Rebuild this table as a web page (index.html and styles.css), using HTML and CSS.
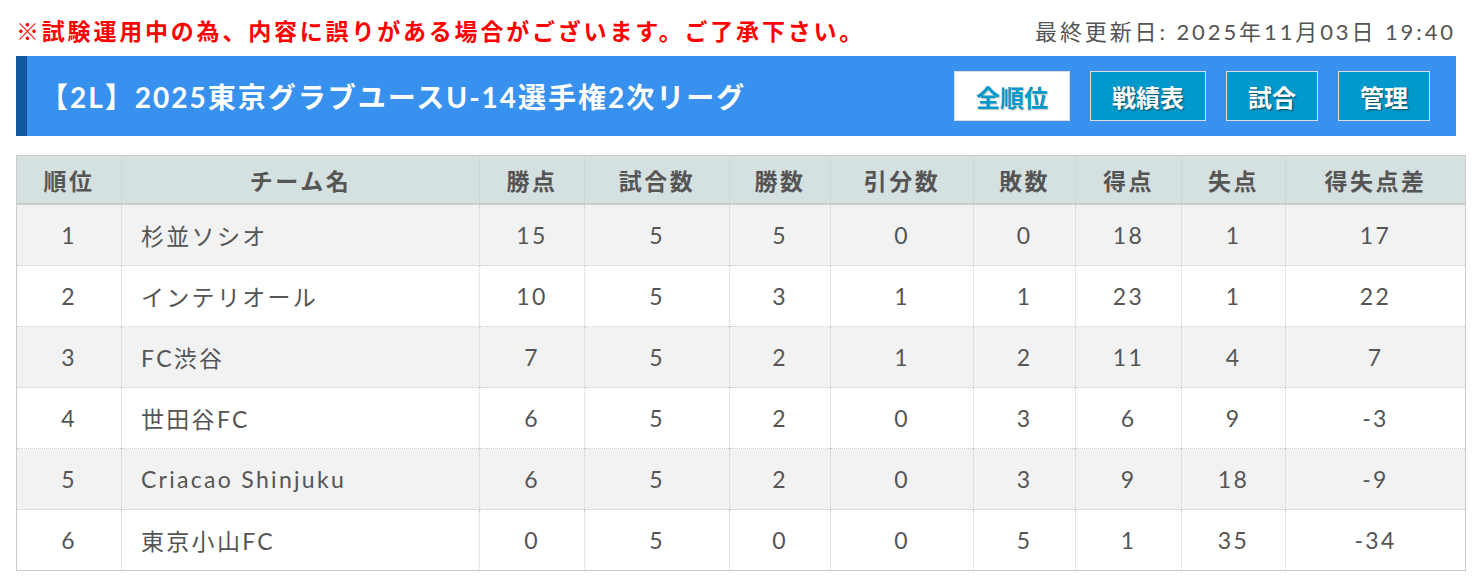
FILE: index.html
```html
<!DOCTYPE html>
<html lang="ja">
<head>
<meta charset="utf-8">
<title>順位表</title>
<link rel="stylesheet" href="styles.css">
</head>
<body>
<div class="page">
  <div class="topbar">
    <p class="notice">※試験運用中の為、内容に誤りがある場合がございます。ご了承下さい。</p>
    <p class="updated">最終更新日: 2025年11月03日 19:40</p>
  </div>
  <div class="titlebar">
    <h1 class="title">【2L】2025東京グラブユースU-14選手権2次リーグ</h1>
    <nav class="tabs">
      <a class="tab active">全順位</a>
      <a class="tab">戦績表</a>
      <a class="tab">試合</a>
      <a class="tab">管理</a>
    </nav>
  </div>
  <table class="standings">
    <colgroup>
      <col class="c-rank"><col class="c-team"><col class="c-pts"><col class="c-games"><col class="c-win"><col class="c-draw"><col class="c-lose"><col class="c-gf"><col class="c-ga"><col class="c-gd">
    </colgroup>
    <thead>
      <tr><th>順位</th><th>チーム名</th><th>勝点</th><th>試合数</th><th>勝数</th><th>引分数</th><th>敗数</th><th>得点</th><th>失点</th><th>得失点差</th></tr>
    </thead>
    <tbody>
      <tr><td>1</td><td class="team">杉並ソシオ</td><td>15</td><td>5</td><td>5</td><td>0</td><td>0</td><td>18</td><td>1</td><td>17</td></tr>
      <tr><td>2</td><td class="team">インテリオール</td><td>10</td><td>5</td><td>3</td><td>1</td><td>1</td><td>23</td><td>1</td><td>22</td></tr>
      <tr><td>3</td><td class="team">FC渋谷</td><td>7</td><td>5</td><td>2</td><td>1</td><td>2</td><td>11</td><td>4</td><td>7</td></tr>
      <tr><td>4</td><td class="team">世田谷FC</td><td>6</td><td>5</td><td>2</td><td>0</td><td>3</td><td>6</td><td>9</td><td>-3</td></tr>
      <tr><td>5</td><td class="team">Criacao Shinjuku</td><td>6</td><td>5</td><td>2</td><td>0</td><td>3</td><td>9</td><td>18</td><td>-9</td></tr>
      <tr><td>6</td><td class="team">東京小山FC</td><td>0</td><td>5</td><td>0</td><td>0</td><td>5</td><td>1</td><td>35</td><td>-34</td></tr>
    </tbody>
  </table>
</div>
</body>
</html>
```
FILE: styles.css
```css
html, body {
  margin: 0;
  padding: 0;
  background: #fff;
}
body {
  font-family: "Lato", "Noto Sans CJK JP", sans-serif;
  color: #555;
}
.page {
  padding: 0 16px;
}
.topbar {
  display: flex;
  justify-content: space-between;
  align-items: center;
  height: 56px;
  padding-top: 3px;
  box-sizing: border-box;
}
.topbar p {
  margin: 0;
}
.notice {
  color: #ff0000;
  font-weight: bold;
  font-size: 23px;
  letter-spacing: 2.8px;
}
.updated {
  font-size: 22px;
  letter-spacing: 2.9px;
  color: #555;
}
.titlebar {
  display: flex;
  align-items: center;
  justify-content: space-between;
  height: 80px;
  background: #3891ee;
  border-left: 11px solid #1059a0;
  padding: 0 26px 0 13px;
}
.title {
  margin: 0;
  color: #fff;
  font-size: 28px;
  font-weight: bold;
  letter-spacing: 2px;
}
.tabs {
  display: flex;
  gap: 20px;
}
.tab {
  display: flex;
  align-items: center;
  justify-content: center;
  height: 50px;
  box-sizing: border-box;
  padding: 0 21px;
  border: 1px solid #dddddd;
  background: #0099cc;
  color: #fff;
  font-size: 24px;
  font-weight: bold;
  text-shadow: 1px 1px 2px rgba(0, 0, 0, 0.55);
}
.tab.active {
  background: #fff;
  color: #0099cc;
  text-shadow: 1px 1px 1px rgba(0, 0, 0, 0.25);
}
.standings {
  margin-top: 19px;
  width: 1450px;
  table-layout: fixed;
  border-collapse: collapse;
  border: 1px solid #cccccc;
  font-size: 23px;
  letter-spacing: 2.3px;
}
.c-rank { width: 105px; }
.c-team { width: 358px; }
.c-pts { width: 105px; }
.c-games { width: 145px; }
.c-win { width: 101px; }
.c-draw { width: 143px; }
.c-lose { width: 102px; }
.c-gf { width: 106px; }
.c-ga { width: 104px; }
.c-gd { width: auto; }
.standings th {
  height: 47px;
  background: #d5e0e0;
  font-weight: bold;
  color: #555;
  letter-spacing: 2.5px;
  border-left: 1px dotted #cccccc;
  border-bottom: 2px solid #cccccc;
  padding: 0;
  text-align: center;
}
.standings td {
  height: 60px;
  padding: 0;
  text-align: center;
  border-left: 1px dotted #cccccc;
  border-top: 1px dotted #cccccc;
}
.standings td.team {
  text-align: left;
  padding-left: 19px;
}
.standings tbody tr:nth-child(odd) td {
  background: #f2f2f2;
}
```
